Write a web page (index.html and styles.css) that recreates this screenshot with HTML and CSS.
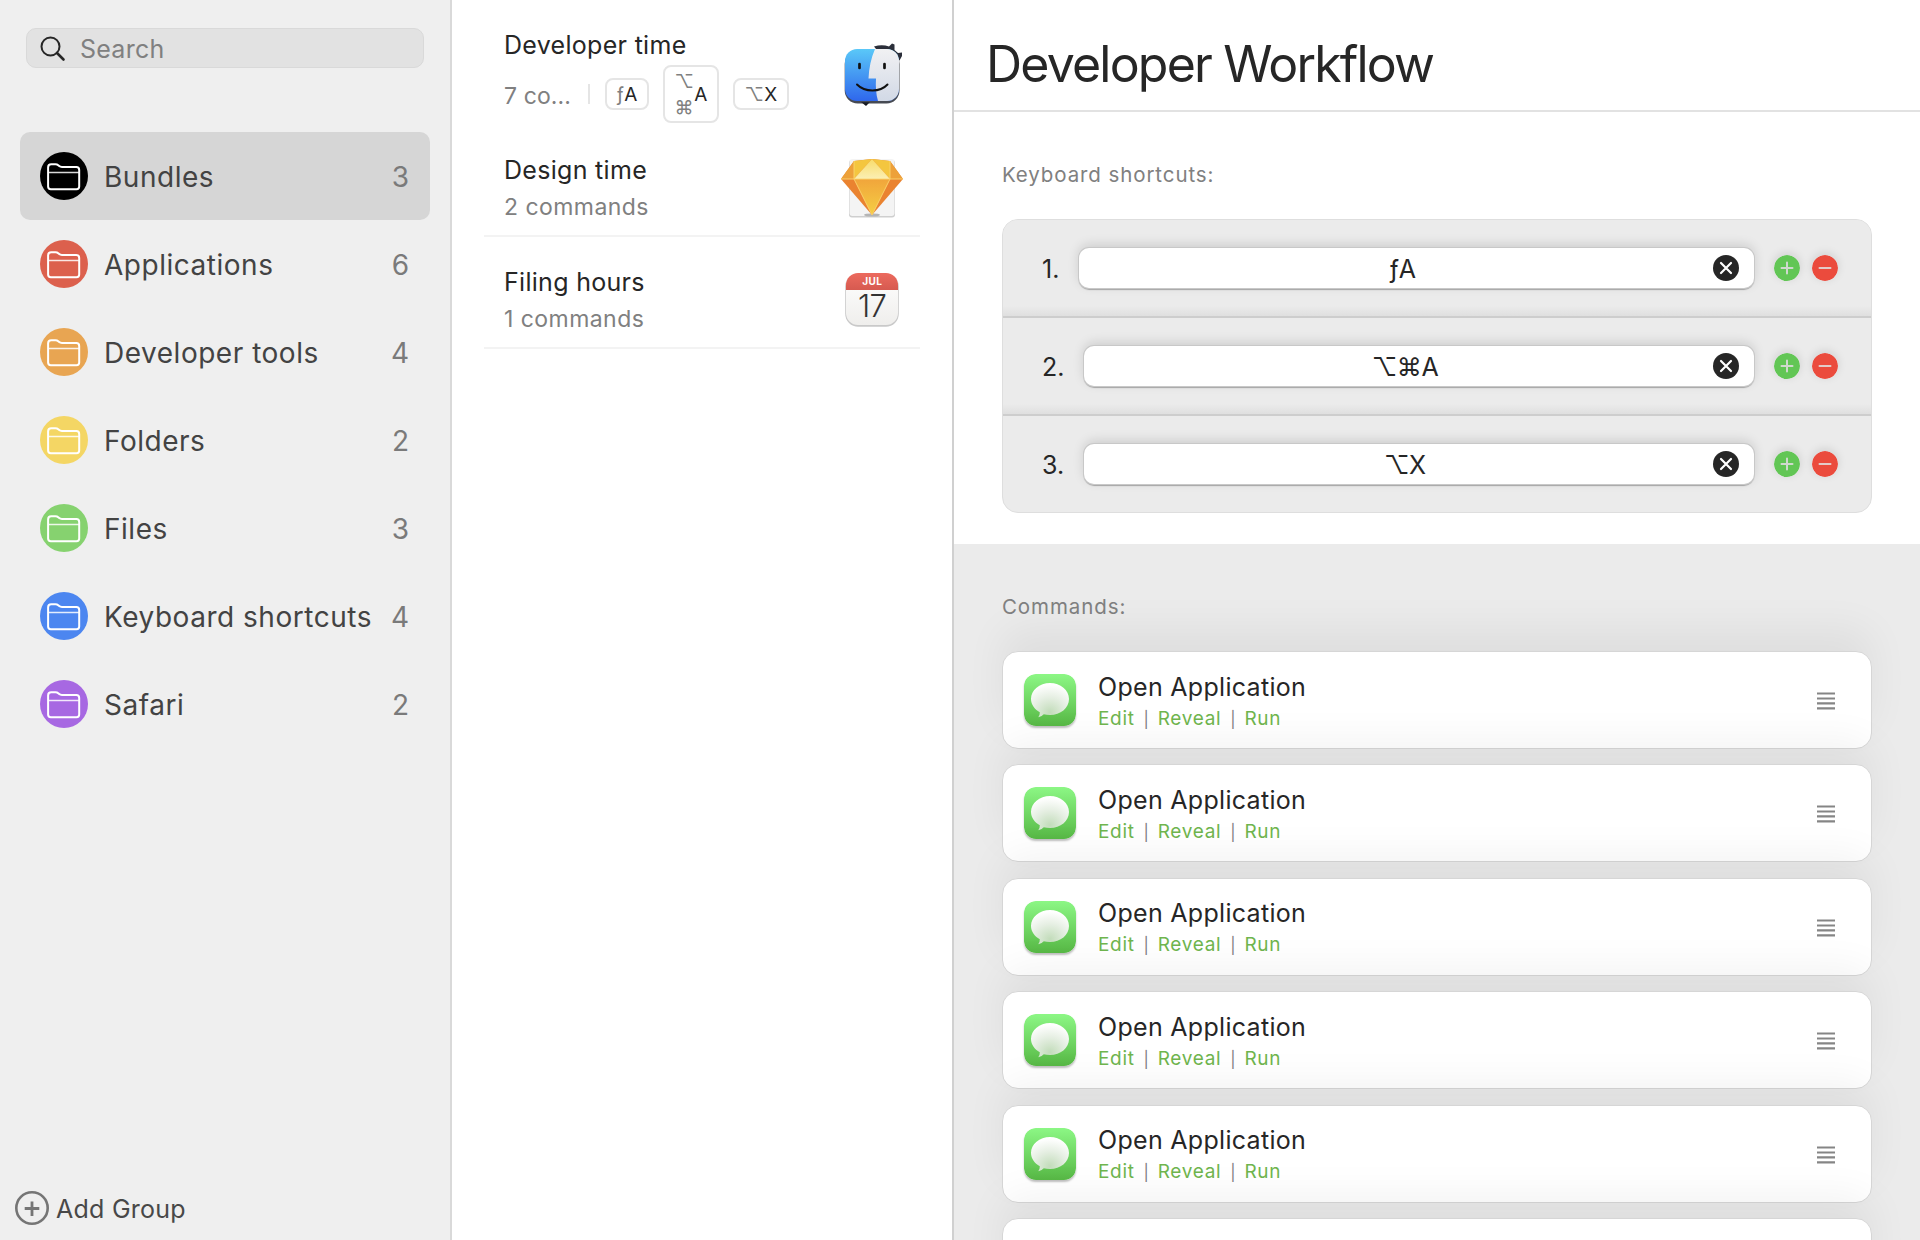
FILE: index.html
```html
<!DOCTYPE html>
<html lang="en">
<head>
<meta charset="utf-8">
<title>Developer Workflow</title>
<link rel="stylesheet" href="styles.css">
</head>
<body>
<svg class="defs" aria-hidden="true">
  <defs>
    <linearGradient id="msg-bg" x1="0" y1="0" x2="0" y2="1"><stop offset="0" stop-color="#8cf785"/><stop offset="1" stop-color="#57b845"/></linearGradient>
    <radialGradient id="msg-bubble" cx=".5" cy=".85" r=".8"><stop offset="0" stop-color="#c2dcba"/><stop offset=".55" stop-color="#e6efe3"/><stop offset="1" stop-color="#fff"/></radialGradient>
    <linearGradient id="finder-blue" x1="0" y1="0" x2="0" y2="1"><stop offset="0" stop-color="#5ac8f8"/><stop offset="1" stop-color="#2f67ec"/></linearGradient>
    <linearGradient id="finder-white" x1="0" y1="0" x2="0" y2="1"><stop offset="0" stop-color="#f1f1f3"/><stop offset="1" stop-color="#d2d9e6"/></linearGradient>
    <linearGradient id="gem-center" x1="0" y1="0" x2="0" y2="1"><stop offset="0" stop-color="#f1a53b"/><stop offset="1" stop-color="#f5cf44"/></linearGradient>
    <linearGradient id="gem-light" x1="0" y1="0" x2="0" y2="1"><stop offset="0" stop-color="#f8dc6a"/><stop offset="1" stop-color="#fbefb4"/></linearGradient>
    <linearGradient id="cal-paper" x1="0" y1="0" x2="0" y2="1"><stop offset="0" stop-color="#fff"/><stop offset="1" stop-color="#efeeec"/></linearGradient>
    <linearGradient id="cal-red" x1="0" y1="0" x2="0" y2="1"><stop offset="0" stop-color="#ec6a5e"/><stop offset="1" stop-color="#d65a50"/></linearGradient>
    <clipPath id="tile"><rect x="0" y="0" width="54" height="52" rx="12"/></clipPath>
    <clipPath id="cal-clip"><rect x="0" y="0" width="52" height="52" rx="12"/></clipPath>
    <symbol id="folder" viewBox="0 0 48 48">
      <path d="M8.100 34.500V15.500Q8.100 12.300 11.300 12.300H15.500Q17.200 12.300 18.200 13.200L19.200 14.100Q20.200 15 22 15H36.300Q39.200 15 39.200 18V34.500Q39.200 37.200 36.500 37.200H10.800Q8.100 37.200 8.100 34.500Z" fill="none" stroke="#fff" stroke-width="2"/>
      <path d="M9 20.500H39" stroke="#fff" stroke-width="1.500" stroke-opacity=".85"/>
    </symbol>
    <symbol id="clear" viewBox="0 0 26 26"><circle cx="13" cy="13" r="13" fill="#262626"/><path d="M8 8L18 18M18 8L8 18" stroke="#fff" stroke-width="2.200" stroke-linecap="round"/></symbol>
    <symbol id="plus" viewBox="0 0 26 26"><circle cx="13" cy="13" r="13" fill="#62c655"/><path d="M7.500 13H18.500M13 7.500V18.500" stroke="#d0d9ce" stroke-width="2" stroke-linecap="round"/></symbol>
    <symbol id="minus" viewBox="0 0 26 26"><circle cx="13" cy="13" r="13" fill="#eb4b3d"/><path d="M7.500 13H18.500" stroke="#e3cbc9" stroke-width="2" stroke-linecap="round"/></symbol>
    <symbol id="messages" viewBox="0 0 52 52"><rect width="52" height="52" rx="11.500" fill="url(#msg-bg)"/><path d="M26 9C36.500 9 45 16 45 25S36.500 41 26 41Q22.600 41 19.800 40.200Q17.500 42.800 14.300 43.200Q16 40.800 15.800 38.200C10.500 35.300 7 30.600 7 25C7 16 15.500 9 26 9Z" fill="url(#msg-bubble)"/></symbol>
    <symbol id="grip" viewBox="0 0 18 18"><path d="M0 1.500H18M0 6.500H18M0 11.300H18M0 16.300H18" stroke="#858585" stroke-width="2.200"/></symbol>
  </defs>
</svg>
<div class="app">
  <aside class="sidebar">
    <div class="search">
      <svg width="26" height="26" viewBox="0 0 26 26"><circle cx="10.500" cy="10.500" r="9" fill="none" stroke="#262626" stroke-width="2"/><path d="M17 17L23.500 23.500" stroke="#262626" stroke-width="2.600" stroke-linecap="round"/></svg>
      <span class="placeholder">Search</span>
    </div>
    <nav class="groups">
      <div class="group selected"><svg class="dot black"><use href="#folder"/></svg><span class="name">Bundles</span><span class="count">3</span></div>
      <div class="group"><svg class="dot red"><use href="#folder"/></svg><span class="name">Applications</span><span class="count">6</span></div>
      <div class="group"><svg class="dot orange"><use href="#folder"/></svg><span class="name">Developer tools</span><span class="count">4</span></div>
      <div class="group"><svg class="dot yellow"><use href="#folder"/></svg><span class="name">Folders</span><span class="count">2</span></div>
      <div class="group"><svg class="dot green"><use href="#folder"/></svg><span class="name">Files</span><span class="count">3</span></div>
      <div class="group"><svg class="dot blue"><use href="#folder"/></svg><span class="name">Keyboard shortcuts</span><span class="count">4</span></div>
      <div class="group"><svg class="dot purple"><use href="#folder"/></svg><span class="name">Safari</span><span class="count">2</span></div>
    </nav>
    <div class="add-group">
      <svg width="34" height="34" viewBox="0 0 34 34"><circle cx="17" cy="17" r="15.700" fill="none" stroke="#757575" stroke-width="2.600"/><path d="M9.700 17.500H24.300M17 10.500V25" stroke="#757575" stroke-width="2.800"/></svg>
      <span>Add Group</span>
    </div>
  </aside>

  <section class="workflows">
    <article class="workflow first">
      <div class="info">
        <h3>Developer time</h3>
        <div class="meta">
          <span class="sub">7 co...</span>
          <i class="bar"></i>
          <kbd><span class="mod">ƒ</span>A</kbd>
          <kbd class="tall"><span class="mod stack"><span>⌥</span><span>⌘</span></span>A</kbd>
          <kbd class="wide"><span class="mod">⌥</span>X</kbd>
        </div>
      </div>
      <svg class="icon" width="64" height="64" viewBox="0 0 64 64">
        <path d="M34 4.500Q42 2 49 4.500L52 1.500L54.500 2.500V8L58 11L62 10.500L62 14L59.500 18.500L56 17L50 10L36 7Z" fill="#2b2f3a"/>
        <path d="M21 60L26 64L30 60Z" fill="#14161c"/>
        <g transform="translate(5 7)">
          <rect x="-.3" y="2" width="54.800" height="52.500" rx="13" fill="#262a35" fill-opacity=".85"/>
          <g clip-path="url(#tile)">
            <rect width="54" height="52" fill="url(#finder-blue)"/>
            <path d="M30 0C26 9 24 19 23.500 29.500H31C30.500 38 31 45 33 52H54V0Z" fill="url(#finder-white)"/>
          </g>
          <path d="M14.500 15V19M39.500 15V19" stroke="#111" stroke-width="2.700" stroke-linecap="round"/>
          <path d="M12 35.500C20 43.500 35 43.500 42.500 35.500" fill="none" stroke="#111" stroke-width="2" stroke-linecap="round"/>
        </g>
      </svg>
    </article>
    <article class="workflow">
      <div class="info"><h3>Design time</h3><span class="sub">2 commands</span></div>
      <svg class="icon" width="64" height="64" viewBox="0 0 64 64">
        <rect x="9" y="5" width="46" height="57.500" rx="3" fill="#cfcfcf"/>
        <rect x="9.500" y="4" width="45" height="57" rx="3" fill="#f4f4f4"/>
        <ellipse cx="32" cy="60" rx="8" ry="1.600" fill="#b5b5b5"/>
        <path d="M14 6L32 4L50 6L63 24L32 60L1 24Z" fill="#ea8330"/>
        <path d="M14 6L32 4L14 24Z" fill="#f4c63f"/><path d="M50 6L32 4L50 24Z" fill="#f4c63f"/>
        <path d="M14 6L1 24H14Z" fill="#eda13a"/><path d="M50 6L63 24H50Z" fill="#eda13a"/>
        <path d="M32 4L14 24H50Z" fill="url(#gem-light)"/>
        <path d="M14 24H50L32 60Z" fill="url(#gem-center)"/>
        <path d="M1 24H63M14 6V24L32 60L50 24V6" fill="none" stroke="#fbd56f" stroke-width=".9"/>
      </svg>
    </article>
    <article class="workflow">
      <div class="info"><h3>Filing hours</h3><span class="sub">1 commands</span></div>
      <svg class="icon" width="64" height="64" viewBox="0 0 64 64">
        <rect x="5.200" y="6.800" width="53.600" height="53" rx="13" fill="#c9c9c9"/>
        <g transform="translate(6 6)" clip-path="url(#cal-clip)"><rect width="52" height="52" fill="url(#cal-paper)"/><rect width="52" height="17" fill="url(#cal-red)"/></g>
        <text x="32.300" y="18" class="cal-month">JUL</text>
        <text x="32" y="50" class="cal-day">17</text>
      </svg>
    </article>
  </section>

  <main class="detail">
    <header><h1>Developer Workflow</h1></header>
    <section class="shortcuts">
      <h2>Keyboard shortcuts:</h2>
      <div class="panel">
        <div class="row"><span class="num">1.</span><div class="field"><span class="keys">ƒA</span><svg><use href="#clear"/></svg></div><svg class="btn"><use href="#plus"/></svg><svg class="btn"><use href="#minus"/></svg></div>
        <div class="row"><span class="num">2.</span><div class="field"><span class="keys">⌥⌘A</span><svg><use href="#clear"/></svg></div><svg class="btn"><use href="#plus"/></svg><svg class="btn"><use href="#minus"/></svg></div>
        <div class="row"><span class="num">3.</span><div class="field"><span class="keys">⌥X</span><svg><use href="#clear"/></svg></div><svg class="btn"><use href="#plus"/></svg><svg class="btn"><use href="#minus"/></svg></div>
      </div>
    </section>
    <section class="commands">
      <h2>Commands:</h2>
      <div class="cards">
        <div class="card"><svg class="app-icon"><use href="#messages"/></svg><div class="body"><h4>Open Application</h4><p><a>Edit</a><i>|</i><a>Reveal</a><i>|</i><a>Run</a></p></div><svg class="grip"><use href="#grip"/></svg></div>
        <div class="card"><svg class="app-icon"><use href="#messages"/></svg><div class="body"><h4>Open Application</h4><p><a>Edit</a><i>|</i><a>Reveal</a><i>|</i><a>Run</a></p></div><svg class="grip"><use href="#grip"/></svg></div>
        <div class="card"><svg class="app-icon"><use href="#messages"/></svg><div class="body"><h4>Open Application</h4><p><a>Edit</a><i>|</i><a>Reveal</a><i>|</i><a>Run</a></p></div><svg class="grip"><use href="#grip"/></svg></div>
        <div class="card"><svg class="app-icon"><use href="#messages"/></svg><div class="body"><h4>Open Application</h4><p><a>Edit</a><i>|</i><a>Reveal</a><i>|</i><a>Run</a></p></div><svg class="grip"><use href="#grip"/></svg></div>
        <div class="card"><svg class="app-icon"><use href="#messages"/></svg><div class="body"><h4>Open Application</h4><p><a>Edit</a><i>|</i><a>Reveal</a><i>|</i><a>Run</a></p></div><svg class="grip"><use href="#grip"/></svg></div>
        <div class="card"></div>
      </div>
    </section>
  </main>
</div>
</body>
</html>
```
FILE: styles.css
```css
* { box-sizing: border-box; margin: 0; padding: 0; }
body { width: 1920px; height: 1240px; overflow: hidden; background: #fff; color: #262626; font-family: Inter, "Liberation Sans", sans-serif; }
.defs { position: absolute; width: 0; height: 0; }
svg { display: block; flex: none; }
h1, h2, h3, h4 { font-weight: 400; }
i { font-style: normal; }
.app { display: flex; height: 1240px; }

.sidebar { width: 452px; background: #efefef; border-right: 2px solid #d9d9d9; padding: 28px 20px 15px; display: flex; flex-direction: column; }
.search { height: 40px; margin: 0 6px 0 6px; border: 1px solid #d9d9d9; border-radius: 10px; background: #e2e2e2; display: flex; align-items: center; padding: 2px 0 0 13px; gap: 14px; }
.placeholder { font-size: 25px; line-height: 38px; letter-spacing: .25px; color: #808080; }
.groups { margin-top: 64px; }
.group { width: 410px; height: 88px; border-radius: 10px; display: flex; align-items: center; padding: 0 21px 0 20px; color: #434343; font-size: 28px; line-height: 34px; }
.selected { background: #d6d6d6; }
.dot { width: 48px; height: 48px; border-radius: 50%; margin-right: 16px; }
.black { background: #000; }
.red { background: #dc604d; }
.orange { background: #e8a552; }
.yellow { background: #f4d664; }
.green { background: #86d26f; }
.blue { background: #4c86f0; }
.purple { background: #a768e2; }
.name { flex: 1; white-space: nowrap; letter-spacing: .52px; padding-top: 2px; }
.count { color: #7a7a7a; padding-top: 2px; }
.add-group { margin: auto 0 0 -5px; display: flex; align-items: center; gap: 7px; color: #484848; font-size: 25px; line-height: 32px; letter-spacing: .25px; }
.add-group span { padding-top: 2px; }

.workflows { width: 502px; border-right: 2px solid #d0d0d0; padding: 15px 32px 0; }
.workflow { height: 112px; border-bottom: 2px solid #f3f3f3; padding: 28px 16px 0 20px; display: flex; justify-content: space-between; }
.workflow.first { height: 110px; border: 0; padding-top: 13px; }
h3 { font-size: 25px; line-height: 34px; letter-spacing: .3px; }
.sub { display: block; font-size: 23px; line-height: 40px; letter-spacing: .45px; color: #808080; }
.meta { display: flex; align-items: center; height: 58px; margin-top: 3px; }
.meta .sub { width: 69px; white-space: nowrap; letter-spacing: .1px; padding-top: 3px; }
.bar { width: 2px; height: 20px; background: #e5e5e5; margin: 0 15px; }
kbd { font: inherit; font-size: 19px; letter-spacing: .2px; width: 44px; height: 32px; border: 2px solid #e5e5e5; border-radius: 8px; display: flex; align-items: center; justify-content: center; }
.mod { color: #808080; }
.tall { width: 56px; height: 58px; margin: 0 14px; }
.wide { width: 56px; }
.stack { display: flex; flex-direction: column; line-height: 26px; padding-top: 2px; }
.icon { margin-top: 2px; }
.first .icon { margin-top: 14px; }
.cal-month { font-size: 10px; font-weight: 700; fill: #fff; text-anchor: middle; letter-spacing: .5px; }
.cal-day { font-size: 31px; font-weight: 300; fill: #333; text-anchor: middle; letter-spacing: -.8px; }

.detail { flex: 1; display: flex; flex-direction: column; }
header { height: 112px; border-bottom: 2px solid #e2e2e2; padding: 34px 0 0 32px; }
h1 { font-size: 50px; line-height: 60px; letter-spacing: -1.8px; }
h2 { font-size: 20.500px; line-height: 26px; letter-spacing: .9px; color: #808080; }
.shortcuts { height: 432px; padding: 50px 48px 0; }
.panel { margin-top: 31px; height: 294px; border: 1px solid #dedede; border-radius: 16px; background: #ebebeb; overflow: hidden; }
.row { height: 98px; padding: 0 33px 0 39px; display: flex; align-items: center; border-bottom: 2px solid #cdcdcd; background: linear-gradient(to top, #dfdfdf, #ebebeb 10px); }
.row:last-child { height: 96px; border: 0; background: none; }
.num { font-size: 25px; padding-top: 2px; }
.field { flex: 1; height: 40px; margin: 0 20px 0 19.500px; border-radius: 10px; background: #fff; display: flex; align-items: center; padding-right: 15px; box-shadow: 0 0 0 1px #c8c8c8, 0 1.500px 1px #a5a5a5, 0 -3px 12px rgba(0,0,0,.14); }
.keys { flex: 1; text-align: center; font-size: 25px; letter-spacing: -.4px; padding: 2px 0 0 13px; }
.field svg, .btn { width: 26px; height: 26px; }
.btn { border-radius: 50%; box-shadow: 0 -2px 10px rgba(0,0,0,.12); }
.btn + .btn { margin-left: 12px; }

.commands { flex: 1; min-height: 0; background: #ebebeb; padding: 50px 48px 0; overflow: hidden; }
.cards { margin-top: 31px; display: flex; flex-direction: column; gap: 15.400px; }
.card { flex: none; height: 98px; border: 1px solid #d6d6d6; border-radius: 16px; background: #fff; box-shadow: 0 -22px 40px rgba(0,0,0,.054); display: flex; align-items: center; padding: 0 36px 0 21px; }
.app-icon { width: 52px; height: 52px; border-radius: 12px; box-shadow: 0 2px 2px rgba(0,0,0,.25); }
.body { flex: 1; padding: 3px 0 0 22px; }
h4 { font-size: 25px; line-height: 34px; letter-spacing: .3px; }
.body p { font-size: 19px; line-height: 30px; letter-spacing: .7px; color: #808080; display: flex; }
.body a { color: #6fb54e; }
.body i { width: 6px; margin: 0 8.500px; font-size: 16px; letter-spacing: 0; text-align: center; }
.grip { width: 18px; height: 18px; margin-top: 2px; }
```
